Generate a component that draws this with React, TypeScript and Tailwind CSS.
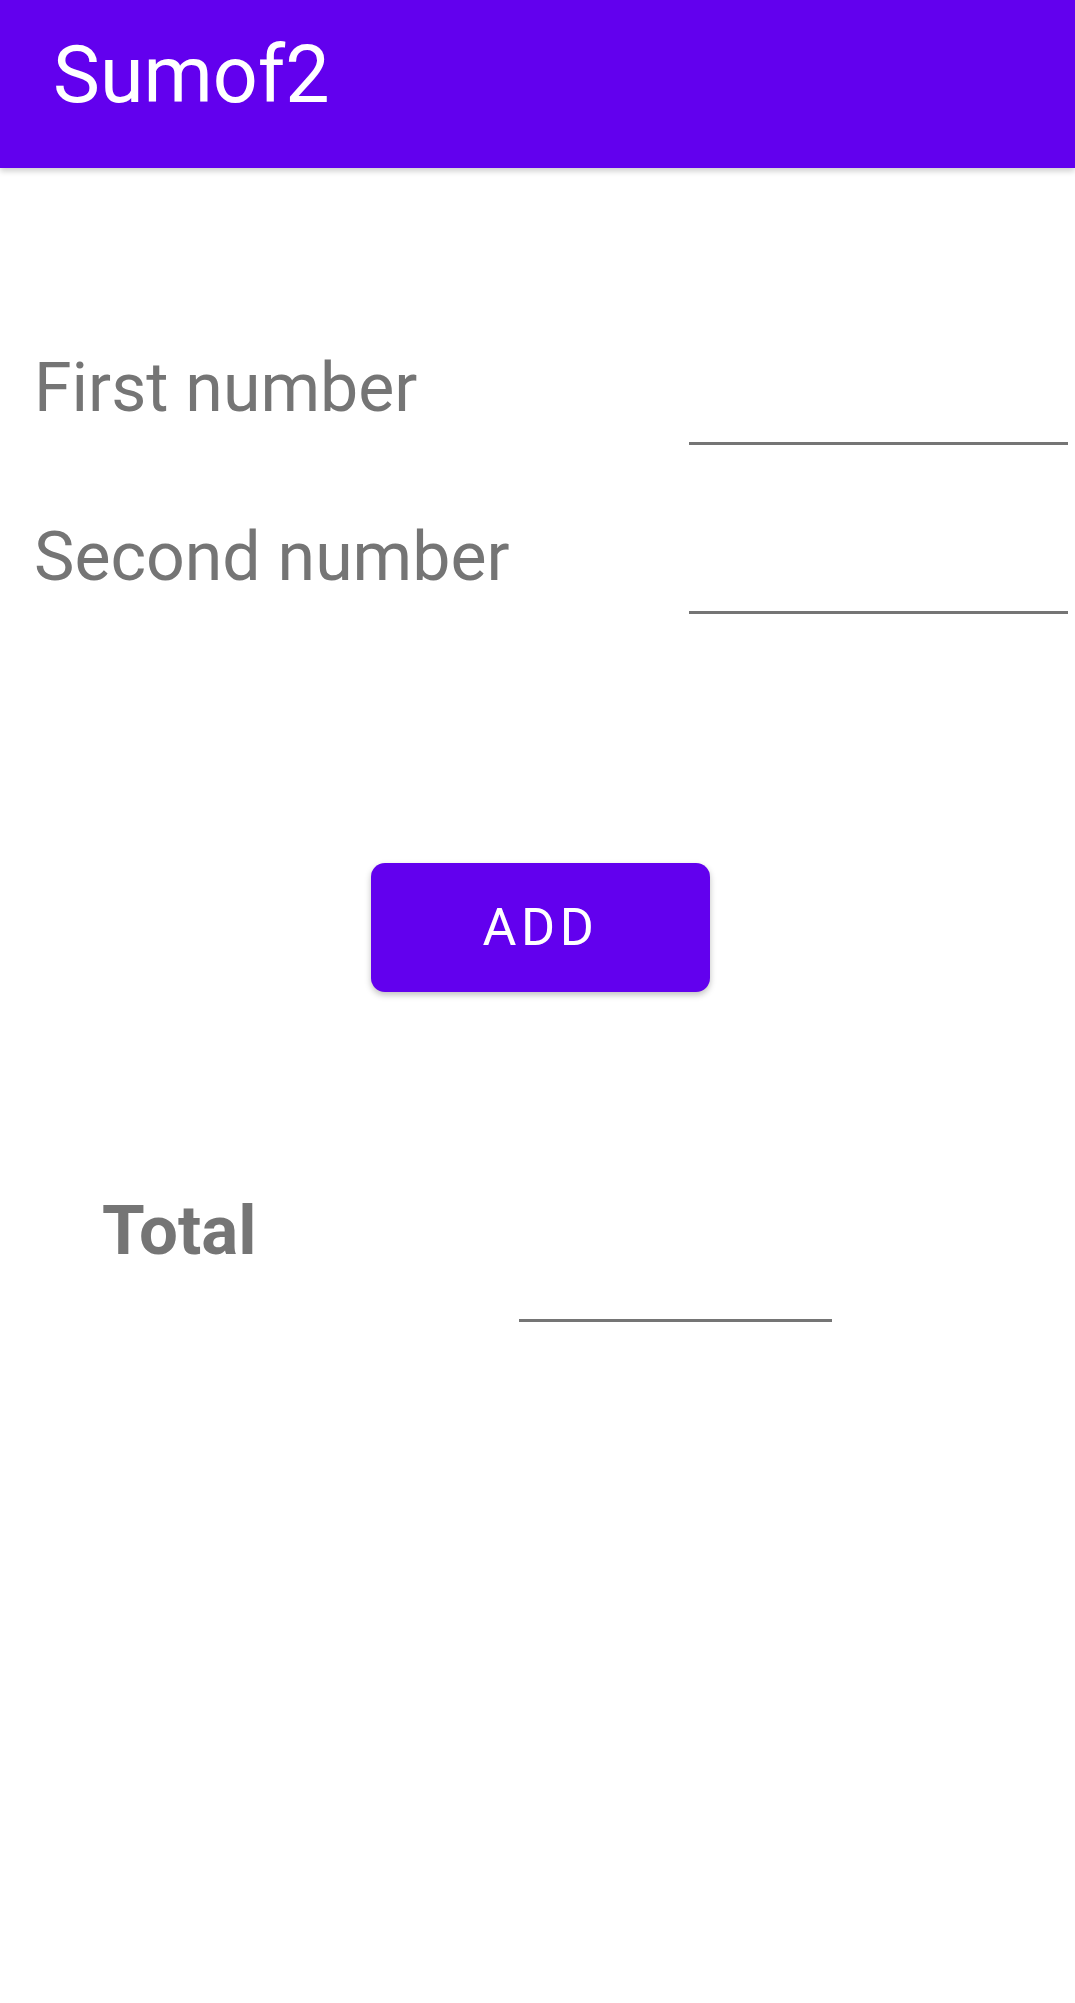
import React from "react";

export default function App() {
  const font = { fontFamily: "Roboto, 'Noto Sans', sans-serif" } as React.CSSProperties;
  return (
    <div className="w-[1075px] min-h-[2003px] bg-white" style={font}>
      <div className="h-[168px] bg-[#6200EE] shadow-[0_3px_6px_rgba(0,0,0,0.2)] relative z-10">
        <div className="pl-[53px] pt-[36px] text-[79px] leading-none text-white font-normal">Sumof2</div>
      </div>
      <div className="pt-[186px]">
        <div className="flex h-[169px]">
          <div className="pl-[34px] text-[68px] leading-none text-[#757575]">First number</div>
          <div className="ml-auto mr-[7px] mt-[88px] w-[379px] h-[3px] bg-[#757575]" />
        </div>
        <div className="flex h-[169px]">
          <div className="pl-[34px] text-[68px] leading-none text-[#757575]">Second number</div>
          <div className="ml-auto mr-[7px] mt-[88px] w-[379px] h-[3px] bg-[#757575]" />
        </div>
        <div className="pl-[371px] pt-[171px]">
          <button className="w-[339px] h-[129px] rounded-[14px] bg-[#6200EE] text-white text-[52px] font-normal tracking-[0.09em] leading-none shadow-[0_3px_6px_rgba(0,0,0,0.25)] flex items-center justify-center">
            ADD
          </button>
        </div>
        <div className="flex pt-[204px]">
          <div className="w-[519px] shrink-0 pl-[102px] text-[69px] font-bold leading-none text-[#757575]">Total</div>
          <div className="mt-[123px] w-[313px] h-[3px] bg-[#757575]" />
        </div>
      </div>
    </div>
  );
}
